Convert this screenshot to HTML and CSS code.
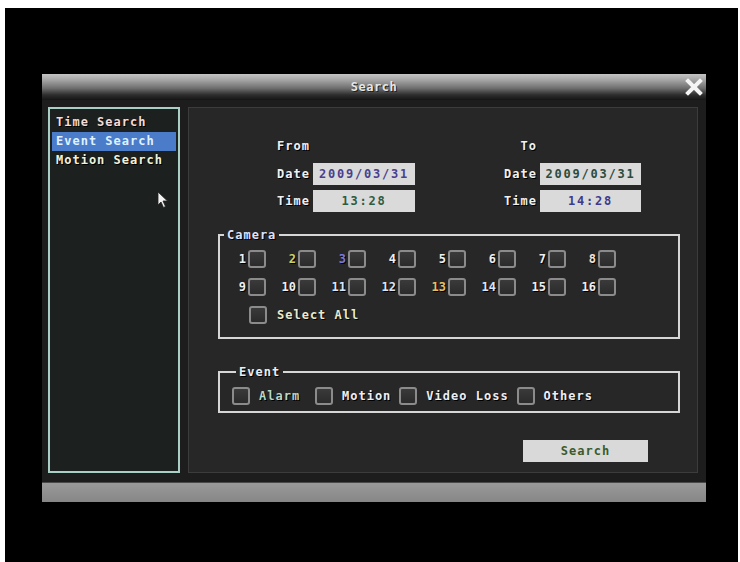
FILE: index.html
```html
<!DOCTYPE html>
<html>
<head>
<meta charset="utf-8">
<link rel="stylesheet" href="styles.css">
</head>
<body>
<div class="screen">
  <div class="dialog">
    <div class="titlebar">
      <span class="title">Search</span>
      <svg class="close" width="18" height="18" viewBox="0 0 18 18"><path d="M3 3 L15 15 M15 3 L3 15" stroke="#f4f4f4" stroke-width="4" stroke-linecap="square"/></svg>
    </div>
    <div class="body">
      <div class="side">
        <div class="menu-item time">Time Search</div>
        <div class="menu-item event active">Event Search</div>
        <div class="menu-item motion">Motion Search</div>
        <svg class="cursor" width="12" height="18" viewBox="0 0 12 18"><path d="M1 1 L1 14 L4 11 L6.5 16.5 L8.5 15.5 L6 10 L10.5 10 Z" fill="#f2f2f2" stroke="#222" stroke-width="0.8"/></svg>
      </div>
      <div class="main">
        <div class="range">
          <div class="range-group">
            <div class="lbl">From</div><div></div>
            <div class="lbl">Date</div><div class="field c-purple">2009/03/31</div>
            <div class="lbl">Time</div><div class="field c-green">13:28</div>
          </div>
          <div class="range-group second">
            <div class="lbl">To</div><div></div>
            <div class="lbl">Date</div><div class="field c-dkgreen">2009/03/31</div>
            <div class="lbl">Time</div><div class="field c-blue">14:28</div>
          </div>
        </div>

        <fieldset class="group camera">
          <legend class="legend-cam">Camera</legend>
          <div class="cam-grid">
            <div class="cell"><span class="num">1</span><span class="cb"></span></div>
            <div class="cell"><span class="num n-yellow">2</span><span class="cb"></span></div>
            <div class="cell"><span class="num n-blue">3</span><span class="cb"></span></div>
            <div class="cell"><span class="num">4</span><span class="cb"></span></div>
            <div class="cell"><span class="num">5</span><span class="cb"></span></div>
            <div class="cell"><span class="num">6</span><span class="cb"></span></div>
            <div class="cell"><span class="num">7</span><span class="cb"></span></div>
            <div class="cell"><span class="num n-peach">8</span><span class="cb"></span></div>
            <div class="cell"><span class="num">9</span><span class="cb"></span></div>
            <div class="cell"><span class="num">10</span><span class="cb"></span></div>
            <div class="cell"><span class="num n-ice">11</span><span class="cb"></span></div>
            <div class="cell"><span class="num n-ice">12</span><span class="cb"></span></div>
            <div class="cell"><span class="num n-orange">13</span><span class="cb"></span></div>
            <div class="cell"><span class="num n-ice">14</span><span class="cb"></span></div>
            <div class="cell"><span class="num">15</span><span class="cb"></span></div>
            <div class="cell"><span class="num">16</span><span class="cb"></span></div>
            <div class="select-all"><span class="cb"></span><span class="sa-text">Select All</span></div>
          </div>
        </fieldset>

        <fieldset class="group event-box">
          <legend class="legend-ev">Event</legend>
          <div class="ev-row">
            <div class="ev-item"><span class="cb"></span><span class="ev-text alarm">Alarm</span></div>
            <div class="ev-item"><span class="cb"></span><span class="ev-text">Motion</span></div>
            <div class="ev-item"><span class="cb"></span><span class="ev-text">Video Loss</span></div>
            <div class="ev-item"><span class="cb"></span><span class="ev-text">Others</span></div>
          </div>
        </fieldset>

        <button class="search-btn">Search</button>
      </div>
    </div>
    <div class="bottombar"></div>
  </div>
</div>
</body>
</html>
```

FILE: styles.css
```css
html, body {
  margin: 0;
  padding: 0;
  background: #ffffff;
}

body {
  font-family: "DejaVu Sans Mono", "Liberation Mono", monospace;
  font-weight: bold;
  font-size: 12px;
  letter-spacing: 1px;
}

.screen {
  margin: 8px 2px 0 5px;
  height: 554px;
  background: #000;
  overflow: hidden;
  padding-top: 66px;
  box-sizing: border-box;
}

.dialog {
  margin-left: 37px;
  width: 664px;
  height: 428px;
  background: #1b1b1b;
  display: flex;
  flex-direction: column;
}

.titlebar {
  position: relative;
  height: 26px;
  flex: none;
  background: linear-gradient(#c4c4c4 0%, #a2a2a2 25%, #6e6e6e 55%, #2e2e2e 80%, #151515 100%);
  text-align: center;
}

.title {
  line-height: 26px;
  color: #e6e6e6;
  text-shadow: 1px 1px 0 #222;
  letter-spacing: 0.5px;
}

.close {
  position: absolute;
  right: 3px;
  top: 4px;
}

.body {
  flex: 1;
  display: flex;
  gap: 8px;
  padding: 7px 8px 9px 6px;
  box-sizing: border-box;
  background: #1d1d1d;
  border-bottom: 1px solid #4a4a4a;
}

.side {
  position: relative;
  width: 132px;
  flex: none;
  box-sizing: border-box;
  border: 2px solid #a9cfc6;
  background: #1c201f;
  padding: 4px 2px 0 2px;
}

.menu-item {
  height: 19px;
  line-height: 19px;
  padding-left: 4px;
  text-shadow: 1px 1px 0 #000;
  white-space: nowrap;
}

.menu-item.time { color: #f4dcd8; }
.menu-item.event { color: #dff2ff; }
.menu-item.motion { color: #f2f2dc; }

.menu-item.active {
  background: #4b7cc9;
  text-shadow: none;
}

.cursor {
  position: absolute;
  left: 107px;
  top: 82px;
}

.main {
  flex: 1;
  box-sizing: border-box;
  border: 1px solid #3c3c3c;
  background: #272727;
  padding: 30px 17px 0 29px;
  display: flex;
  flex-direction: column;
}

.range {
  display: flex;
  margin-left: 58px;
}

.range-group {
  display: grid;
  grid-template-columns: 34px 102px;
  grid-template-rows: 16px 22px 22px;
  column-gap: 3px;
  row-gap: 5px;
}

.range-group.second {
  margin-left: 87px;
  grid-template-columns: 35px 101px;
}

.range-group > .lbl:first-child {
  margin-bottom: 0;
}

.range-group > :nth-child(3),
.range-group > :nth-child(4) {
  margin-top: 4px;
}

.range-group {
  grid-template-rows: 16px 26px 22px;
}

.range-group > :nth-child(4) {
  height: 22px;
}

.lbl {
  color: #f0f0f0;
  text-align: right;
  line-height: 22px;
  text-shadow: 1px 1px 0 #000;
  white-space: nowrap;
}

.range-group > .lbl:first-child {
  line-height: 16px;
}

.field {
  background: #dadada;
  line-height: 22px;
  height: 22px;
  text-align: center;
  letter-spacing: 1.8px;
}

.c-purple { color: #4b3f8f; }
.c-green { color: #2d5c42; }
.c-dkgreen { color: #2c4b3a; }
.c-blue { color: #3d3a8e; }

.group {
  margin: 0;
  padding: 0;
  border: 2px solid #d6d6d6;
  min-width: 0;
}

.group legend {
  padding: 0 3px;
  margin-left: 4px;
  line-height: 14px;
  text-shadow: 1px 1px 0 #000;
}

.legend-cam { color: #dfe2fb; }
.legend-ev { color: #e6eef6; }

.camera {
  margin-top: 16px;
  padding: 8px 0 13px 0;
}

.cam-grid {
  display: grid;
  grid-template-columns: repeat(8, 50px);
  grid-auto-rows: 18px;
  row-gap: 10px;
}

.cell {
  display: flex;
  align-items: center;
}

.num {
  width: 26px;
  margin-right: 2px;
  text-align: right;
  color: #efefef;
  text-shadow: 1px 1px 0 #000;
  letter-spacing: 0;
}

.n-yellow { color: #c9d267; }
.n-blue { color: #7a78dc; }
.n-peach { color: #f3e2d3; }
.n-ice { color: #d9e6fb; }
.n-orange { color: #e6c064; }

.cb {
  display: inline-block;
  width: 18px;
  height: 18px;
  box-sizing: border-box;
  border: 2px solid #8b8b8b;
  border-radius: 3px;
  background: linear-gradient(#3a3a3a, #2b2b2b);
  flex: none;
}

.select-all {
  grid-column: 1 / -1;
  display: flex;
  align-items: center;
  padding-left: 29px;
  gap: 10px;
}

.sa-text {
  color: #eaeacb;
  text-shadow: 1px 1px 0 #000;
}

.event-box {
  margin-top: 26px;
  padding: 8px 0 6px 12px;
}

.ev-row {
  display: flex;
  align-items: center;
}

.ev-item {
  display: flex;
  align-items: center;
  gap: 9px;
  margin-right: 8px;
}

.ev-text {
  color: #eeeef2;
  text-shadow: 1px 1px 0 #000;
}

.ev-text.alarm {
  color: #b6d8c8;
  min-width: 48px;
}

.search-btn {
  align-self: flex-end;
  margin: 27px 32px 0 0;
  width: 125px;
  height: 22px;
  border: none;
  background: #d9d9d9;
  color: #3b5b29;
  font-family: "DejaVu Sans Mono", "Liberation Mono", monospace;
  font-weight: bold;
  font-size: 12px;
  letter-spacing: 1px;
  padding: 0;
}

.bottombar {
  height: 19px;
  flex: none;
  background: linear-gradient(#9a9a9a, #868686);
}
```
